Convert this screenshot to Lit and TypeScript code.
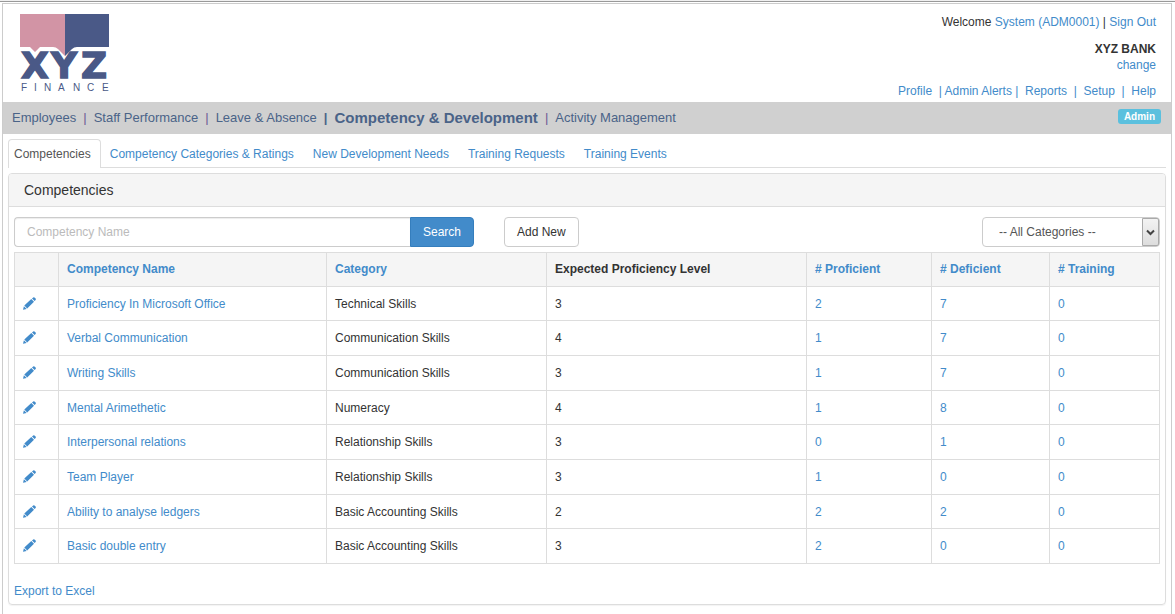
import { LitElement, html, css, svg } from "lit";
import { customElement, state } from "lit/decorators.js";

interface Competency {
  name: string;
  category: string;
  level: number;
  proficient: number;
  deficient: number;
  training: number;
}

const COMPETENCIES: Competency[] = [
  { name: "Proficiency In Microsoft Office", category: "Technical Skills", level: 3, proficient: 2, deficient: 7, training: 0 },
  { name: "Verbal Communication", category: "Communication Skills", level: 4, proficient: 1, deficient: 7, training: 0 },
  { name: "Writing Skills", category: "Communication Skills", level: 3, proficient: 1, deficient: 7, training: 0 },
  { name: "Mental Arimethetic", category: "Numeracy", level: 4, proficient: 1, deficient: 8, training: 0 },
  { name: "Interpersonal relations", category: "Relationship Skills", level: 3, proficient: 0, deficient: 1, training: 0 },
  { name: "Team Player", category: "Relationship Skills", level: 3, proficient: 1, deficient: 0, training: 0 },
  { name: "Ability to analyse ledgers", category: "Basic Accounting Skills", level: 2, proficient: 2, deficient: 2, training: 0 },
  { name: "Basic double entry", category: "Basic Accounting Skills", level: 3, proficient: 2, deficient: 0, training: 0 },
];

const MODULES = ["Employees", "Staff Performance", "Leave & Absence", "Competency & Development", "Activity Management"];
const TABS = ["Competencies", "Competency Categories & Ratings", "New Development Needs", "Training Requests", "Training Events"];

const pencil = svg`
  <svg class="pencil" viewBox="0 0 13 13" width="13" height="13" aria-hidden="true">
    <path d="M0 12.8 0.9 9.2 3.7 12z M1.3 8.6 8.3 2 11 4.7 4.2 11.4z M9 1.4 10.2 0.4Q10.9 -0.1 11.5 0.5L12.6 1.6Q13.2 2.2 12.6 2.9L11.6 4z"/>
  </svg>`;

@customElement("company-logo")
export class CompanyLogo extends LitElement {
  static styles = css`
    :host { display: block; }
    .logo { display: block; }
    .pink { fill: #d294a5; }
    .navy { fill: #4a5987; }
    .name { font: bold 36px "DejaVu Sans", sans-serif; fill: #4a5987; stroke: #4a5987; stroke-width: 1.4px; }
    .tag { font: 10px "Liberation Sans", sans-serif; fill: #4a5987; }
  `;

  render() {
    return html`
      <svg class="logo" width="92" height="80" viewBox="0 0 92 80" role="img" aria-label="XYZ Finance">
        <path class="pink" d="M1 0H46V42L39 35Q37 33 34 33H21L16 38 11 33H1z"></path>
        <path class="navy" d="M46 0H90V33H58Q55 33 53 35L46 42z"></path>
        <text class="name" x="2 32 62" y="64">XYZ</text>
        <text class="tag" x="2 15 25 39 54 68 83" y="77">FINANCE</text>
      </svg>`;
  }
}

@customElement("app-root")
export class AppRoot extends LitElement {
  @state() private query = "";

  static styles = css`
    :host {
      display: block;
      border-top: 1px solid #f0f0f0;
      background: #fff;
      color: #333;
      font: 12px/18px "Liberation Sans", Arial, sans-serif;
    }
    * { box-sizing: border-box; }
    a { color: #428bca; text-decoration: none; }
    a:hover { text-decoration: underline; }
    .window { border-top: 1px solid #999; padding: 1px 3px 0 2px; }
    .frame { border: 1px solid #ccc; border-bottom: 0; padding-bottom: 10px; }

    .header { display: flex; justify-content: space-between; padding: 10px 15px 0 16px; }
    .account { display: flex; flex-direction: column; align-items: flex-end; line-height: 16px; }
    .welcome { margin-bottom: 11px; }
    .company { font-weight: bold; }
    .links { margin-top: 10px; padding-bottom: 3px; color: #428bca; white-space: pre; }

    .modules {
      display: flex;
      align-items: center;
      gap: 7px;
      padding: 0 10px 0 9px;
      background: #d0d0d0;
      color: #6b5b95;
      font-size: 13px;
      line-height: 32px;
    }
    .module { color: #4a6388; }
    .module.current { font-weight: bold; font-size: 15px; }
    .sep.strong { font-weight: bold; color: #4a6388; }
    .badge {
      align-self: flex-start;
      margin: 7px 0 0 auto;
      padding: 0 6px;
      border-radius: 3px;
      background: #5bc0de;
      color: #fff;
      font-size: 10px;
      font-weight: bold;
      line-height: 15px;
    }

    .content { padding: 5px 5px 0; }
    .tabs { display: flex; gap: 3px; border-bottom: 1px solid #ddd; }
    .tab { padding: 5px 9px 4px 5px; border: 1px solid transparent; border-bottom: 0; }
    .tab.current {
      margin-bottom: -1px;
      padding-bottom: 5px;
      border-color: #ddd;
      border-radius: 4px 4px 0 0;
      background: #fff;
      color: #555;
    }

    .panel { margin-top: 5px; border: 1px solid #ddd; border-radius: 4px; box-shadow: 0 1px 1px rgba(0, 0, 0, 0.05); }
    .title {
      margin: 0;
      padding: 7px 15px;
      border-bottom: 1px solid #ddd;
      border-radius: 3px 3px 0 0;
      background: #f5f5f5;
      font-size: 14px;
      font-weight: normal;
    }
    .body { padding: 10px 5px 4px; }

    .toolbar { display: flex; margin-bottom: 5px; }
    .search { display: flex; width: 460px; }
    .field, .button, .choice {
      height: 30px;
      border: 1px solid #ccc;
      border-radius: 4px;
      background: #fff;
      color: #333;
      font: inherit;
    }
    .field {
      flex: 1;
      min-width: 0;
      padding: 0 12px;
      border-right: 0;
      border-radius: 4px 0 0 4px;
      box-shadow: inset 0 1px 1px rgba(0, 0, 0, 0.075);
    }
    .field::placeholder { color: #bbb; opacity: 1; }
    .button { padding: 0 12px; cursor: pointer; }
    .button.primary { border-color: #357ebd; border-radius: 0 4px 4px 0; background: #428bca; color: #fff; }
    .button.add { margin-left: 30px; }
    .picker { position: relative; width: 178px; margin-left: auto; }
    .choice { width: 100%; padding: 0 32px 0 16px; color: #555; appearance: none; }
    .arrow {
      position: absolute;
      inset: 1px 1px 1px auto;
      display: grid;
      place-items: center;
      width: 17px;
      border: 1px solid #aaa;
      border-radius: 0 2px 2px 0;
      background: linear-gradient(#f3f3f3, #ddd);
      pointer-events: none;
    }
    .arrow svg { fill: none; stroke: #444; stroke-width: 2; }

    .grid { width: 100%; table-layout: fixed; border-collapse: collapse; }
    .edit { width: 44px; }
    .name { width: 268px; }
    .category { width: 220px; }
    .level { width: 260px; }
    .proficient { width: 125px; }
    .deficient { width: 118px; }
    .training { width: 110px; }
    th, td { padding: 8px; border: 1px solid #ddd; text-align: left; }
    th { padding-top: 7px; background: #f5f5f5; }
    tbody tr:nth-child(3n + 1) td { padding-bottom: 7px; }
    .pencil { display: block; margin-bottom: 2px; fill: #428bca; }
    .export { display: inline-block; margin-top: 18px; }
  `;

  private onSearch(event: Event) {
    event.preventDefault();
    const data = new FormData(event.target as HTMLFormElement);
    this.query = String(data.get("name") ?? "").toLowerCase();
  }

  private renderHeader() {
    return html`
      <header class="header">
        <company-logo></company-logo>
        <div class="account">
          <div class="welcome">Welcome <a href="#user">System (ADM0001)</a> | <a href="#out">Sign Out</a></div>
          <div class="company">XYZ BANK</div>
          <a href="#change">change</a>
          <nav class="links" aria-label="Account"><a href="#profile">Profile</a>  | <a href="#alerts">Admin Alerts</a> |  <a href="#reports">Reports</a>  |  <a href="#setup">Setup</a>  |  <a href="#help">Help</a></nav>
        </div>
      </header>`;
  }

  private renderModules() {
    return html`
      <nav class="modules" aria-label="Modules">
        ${MODULES.map((label, i) => html`
          ${i ? html`<span class="sep ${i === 3 ? "strong" : ""}">|</span>` : ""}
          <a class="module ${i === 3 ? "current" : ""}" href="#module">${label}</a>`)}
        <span class="badge">Admin</span>
      </nav>`;
  }

  private renderToolbar() {
    return html`
      <div class="toolbar">
        <form class="search" @submit=${this.onSearch}>
          <input class="field" name="name" type="text" aria-label="Competency Name" placeholder="Competency Name" />
          <button class="button primary" type="submit">Search</button>
        </form>
        <button class="button add" type="button">Add New</button>
        <div class="picker">
          <select class="choice" aria-label="Category">
            <option>-- All Categories --</option>
          </select>
          <span class="arrow">
            <svg width="9" height="7" viewBox="0 0 9 7" aria-hidden="true"><path d="M1 1.5 4.5 5 8 1.5"/></svg>
          </span>
        </div>
      </div>`;
  }

  private renderTable() {
    const rows = COMPETENCIES.filter((c) => c.name.toLowerCase().includes(this.query));
    return html`
      <table class="grid">
        <thead>
          <tr>
            <th class="edit"></th>
            <th class="name"><a href="#sort">Competency Name</a></th>
            <th class="category"><a href="#sort">Category</a></th>
            <th class="level">Expected Proficiency Level</th>
            <th class="proficient"><a href="#sort"># Proficient</a></th>
            <th class="deficient"><a href="#sort"># Deficient</a></th>
            <th class="training"><a href="#sort"># Training</a></th>
          </tr>
        </thead>
        <tbody>
          ${rows.map((c) => html`
            <tr>
              <td><a href="#edit" aria-label="Edit">${pencil}</a></td>
              <td><a href="#view">${c.name}</a></td>
              <td>${c.category}</td>
              <td>${c.level}</td>
              <td><a href="#list">${c.proficient}</a></td>
              <td><a href="#list">${c.deficient}</a></td>
              <td><a href="#list">${c.training}</a></td>
            </tr>`)}
        </tbody>
      </table>`;
  }

  render() {
    return html`
      <div class="window">
        <div class="frame">
          ${this.renderHeader()}
          ${this.renderModules()}
          <main class="content">
            <nav class="tabs" aria-label="Sections">
              ${TABS.map((label, i) => html`<a class="tab ${i ? "" : "current"}" href="#tab">${label}</a>`)}
            </nav>
            <section class="panel">
              <h1 class="title">Competencies</h1>
              <div class="body">
                ${this.renderToolbar()}
                ${this.renderTable()}
                <a class="export" href="#export">Export to Excel</a>
              </div>
            </section>
          </main>
        </div>
      </div>`;
  }
}
